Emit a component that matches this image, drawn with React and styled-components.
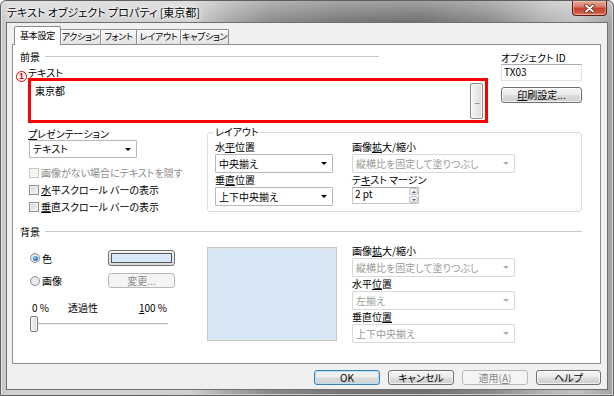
import React from "react";
import styled, { createGlobalStyle } from "styled-components";

const FONT = `"Noto Sans CJK JP", "Noto Sans", sans-serif`;

const GlobalStyle = createGlobalStyle`
  html, body { margin: 0; padding: 0; background: #fff; }
  body {
    font-family: ${FONT};
    font-size: 10px;
    color: #000;
    font-feature-settings: "palt" 1;
  }
  #root { width: 614px; height: 396px; overflow: hidden; }
  *, *::before, *::after { box-sizing: border-box; }
`;

const Window = styled.div`
  width: 614px;
  height: 396px;
  display: flex;
  flex-direction: column;
  border: 1px solid #5f5f5f;
  border-radius: 6px 6px 0 0;
  padding: 0 5px 5px;
  background-image: linear-gradient(180deg, rgba(255,255,255,0.35) 0px, rgba(255,255,255,0) 22px),
    linear-gradient(90deg, #c4c4c4 0px, #d2d2d2 8px, #cfcfcf 190px, #aaaaaa 225px, #8a8a8a 270px, #767676 340px,
      #6e6e6e 420px, #8a8a8a 490px, #b4b4b4 545px, #c2c2c2 575px, #a2a2a2 612px);
  box-shadow: inset 1px 0 0 #e6e6e6, inset -1px 0 0 #dcdcdc, inset 0 -1px 0 #d0d0d0;
`;

const TitleBar = styled.div`
  height: 21px;
  margin: 0 -5px;
  padding: 0 6px;
  display: flex;
  align-items: flex-start;
  justify-content: space-between;
`;

const TitleText = styled.div`
  font-size: 11px;
  line-height: 12px;
  margin-top: 5px;
  color: #000;
  text-shadow: 0 0 6px #fff, 0 0 3px #fff, 0 0 2px #fff;
`;

const CloseButton = styled.div`
  width: 35px;
  height: 15px;
  display: flex;
  align-items: center;
  justify-content: center;
  border: 1px solid #5b1d15;
  border-top: none;
  border-radius: 0 0 4px 4px;
  background: linear-gradient(180deg, #e9a99b 0%, #d77a66 42%, #c2402e 52%, #cf5a43 85%, #e08a70 100%);
  box-shadow: inset 0 0 0 1px rgba(255, 220, 210, 0.45);
`;

const Client = styled.div`
  flex: 1;
  display: flex;
  flex-direction: column;
  background: #f0f0f0;
  border: 1px solid #6f6f6f;
  padding: 3px 6px 0 5px;
`;

const TabRow = styled.div`
  display: flex;
  align-items: flex-end;
  height: 18px;
  padding-left: 2px;
`;

const Tab = styled.div`
  position: relative;
  z-index: ${(p) => (p.$active ? 2 : 1)};
  width: ${(p) => p.$w}px;
  height: ${(p) => (p.$active ? 19 : 15)}px;
  margin-left: ${(p) => (p.$first ? 0 : -1)}px;
  margin-bottom: ${(p) => (p.$active ? -1 : 0)}px;
  display: flex;
  align-items: center;
  justify-content: center;
  border: 1px solid #898c95;
  border-bottom: none;
  border-radius: 2px 2px 0 0;
  background: ${(p) => (p.$active ? "#fff" : "linear-gradient(180deg, #fbfbfb 0%, #eeeeee 50%, #e2e2e2 100%)")};
  box-shadow: ${(p) => (p.$active ? "none" : "inset 1px 1px 0 #fff")};
  font-size: 9px;
  letter-spacing: -0.3px;
  line-height: 12px;
  white-space: nowrap;
`;

const Panel = styled.div`
  position: relative;
  height: 320px;
  flex: none;
  background: #fff;
  border: 1px solid #898c95;
  padding: 5px 18px 0 7px;
  display: flex;
  flex-direction: column;
`;

const SectionHeader = styled.div`
  display: flex;
  align-items: center;
  height: 13px;
  line-height: 13px;
  margin-top: ${(p) => p.$mt || 0}px;
  white-space: nowrap;
`;

const Rule = styled.div`
  flex: 1;
  height: 1px;
  margin-left: 5px;
  margin-right: ${(p) => p.$end || 0}px;
  background: #c9c9c9;
`;

const TopArea = styled.div`
  display: flex;
  align-items: flex-start;
`;

const TopLeft = styled.div`
  flex: 1;
  display: flex;
  flex-direction: column;
`;

const TopRight = styled.div`
  width: 81px;
  margin-left: 13px;
  padding-top: 2px;
  display: flex;
  flex-direction: column;
`;

const Caption = styled.div`
  height: ${(p) => p.$lh || 12}px;
  line-height: ${(p) => p.$lh || 12}px;
  margin-left: ${(p) => p.$ml || 0}px;
  margin-top: ${(p) => p.$mt || 0}px;
  white-space: nowrap;
  color: ${(p) => (p.$disabled ? "#8d8d8d" : "#000")};
`;

const AnnotatedCaption = styled(Caption)`
  position: relative;
`;

const Badge = styled.span`
  position: absolute;
  left: -12px;
  top: 3px;
  width: 11px;
  height: 11px;
  border: 1px solid #e00000;
  border-radius: 50%;
  background: #fff;
  color: #e00000;
  font-family: "Liberation Sans", sans-serif;
  font-size: 9px;
  font-weight: bold;
  line-height: 9px;
  text-align: center;
`;

const RedFrame = styled.div`
  height: 45px;
  margin-left: 8px;
  border: 3px solid #ff0000;
  background: #fff;
  display: flex;
`;

const TextArea = styled.div`
  flex: 1;
  padding: 4px 4px 0;
  line-height: 12px;
`;

const EllipsisButton = styled.div`
  width: 13px;
  margin: 2px 2px 1px 0;
  display: flex;
  align-items: center;
  justify-content: center;
  border: 1px solid #8a8a8a;
  border-radius: 2px;
  background: linear-gradient(90deg, #f4f4f4 0%, #e9e9e9 50%, #dadada 100%);
  box-shadow: inset 0 0 0 1px #fbfbfb;
  color: #555;
  font-family: "Liberation Sans", sans-serif;
  font-size: 9px;
  letter-spacing: -1px;
  line-height: 9px;
  overflow: hidden;
`;

const TextInput = styled.div`
  height: 17px;
  padding: 0 2px;
  line-height: 14px;
  border: 1px solid #e2e3ea;
  border-top-color: #abadb3;
  background: #fff;
`;

const PushButton = styled.div`
  flex: none;
  width: ${(p) => p.$w}px;
  height: ${(p) => p.$h}px;
  margin-top: ${(p) => p.$mt || 0}px;
  display: flex;
  align-items: center;
  justify-content: center;
  border: 1px solid ${(p) => (p.$disabled ? "#b5b9bc" : p.$default ? "#3c7fb1" : "#707070")};
  border-radius: 3px;
  background: ${(p) =>
    p.$disabled
      ? "#f4f4f4"
      : "linear-gradient(180deg, #f4f4f4 0%, #ebebeb 48%, #dddddd 52%, #cfcfcf 100%)"};
  box-shadow: ${(p) =>
    p.$disabled ? "none" : p.$default ? "inset 0 0 0 1px #b4e2f8" : "inset 0 0 0 1px rgba(255,255,255,0.7)"};
  color: ${(p) => (p.$disabled ? "#8a8a8a" : "#000")};
  font-size: 10px;
  line-height: 12px;
  white-space: nowrap;
`;

const U = styled.span`
  text-decoration: underline;
  text-underline-offset: 1px;
`;

const Section2 = styled.div`
  display: flex;
  align-items: flex-start;
  margin-top: 4px;
`;

const PresCol = styled.div`
  width: 172px;
  margin-left: 8px;
  padding-top: 1px;
  display: flex;
  flex-direction: column;
`;

const SelectBox = styled.div`
  flex: none;
  width: ${(p) => p.$w}px;
  height: ${(p) => p.$h || 19}px;
  margin-left: ${(p) => p.$ml || 0}px;
  display: flex;
  align-items: center;
  justify-content: space-between;
  padding: 0 5px 0 3px;
  border: 1px solid ${(p) => (p.$disabled ? "#d9d9d9" : "#b9b9b9")};
  border-radius: 1px;
  background: #fff;
  color: ${(p) => (p.$disabled ? "#9a9a9a" : "#000")};
  line-height: 12px;
  white-space: nowrap;
  overflow: hidden;
`;

const Arrow = styled.span`
  flex: none;
  width: 0;
  height: 0;
  border-left: 3px solid transparent;
  border-right: 3px solid transparent;
  border-top: 3px solid ${(p) => (p.$disabled ? "#b0b0b0" : "#000")};
`;

const Select = ({ children, disabled, ...rest }) => (
  <SelectBox $disabled={disabled} {...rest}>
    <span>{children}</span>
    <Arrow $disabled={disabled} />
  </SelectBox>
);

const CheckList = styled.div`
  margin-top: 6px;
  display: flex;
  flex-direction: column;
`;

const CheckRow = styled.div`
  height: 17px;
  padding-left: 1px;
  display: flex;
  align-items: center;
  gap: 2px;
  white-space: nowrap;
  color: ${(p) => (p.$disabled ? "#8d8d8d" : "#000")};
`;

const CheckBox = styled.span`
  flex: none;
  width: 10px;
  height: 10px;
  border: 1px solid ${(p) => (p.$disabled ? "#c4c4c4" : "#8e8f8f")};
  background: ${(p) => (p.$disabled ? "#f4f4f4" : "linear-gradient(135deg, #cbcfd5 0%, #e8e9ea 60%, #f6f6f6 100%)")};
  box-shadow: inset 0 0 0 1px ${(p) => (p.$disabled ? "#fafafa" : "#f4f4f4")};
`;

const Group = styled.fieldset`
  flex: 1;
  min-width: 0;
  margin: 0 0 0 7px;
  padding: 3px 7px 5px 7px;
  border: 1px solid #d5dfe5;
  border-radius: 3px;
`;

const Legend = styled.legend`
  padding: 0 1px;
  margin-left: -1px;
  font-size: 10px;
  line-height: 10px;
`;

const GroupGrid = styled.div`
  display: grid;
  grid-template-columns: 118px 163px;
  column-gap: 19px;
`;

const Field = styled.div`
  display: flex;
  flex-direction: column;
`;

const Spin = styled.div`
  width: 67px;
  height: 17px;
  display: flex;
  border: 1px solid #c4c6cc;
  border-top-color: #abadb3;
  background: #fff;
`;

const SpinText = styled.div`
  flex: 1;
  padding: 0 2px;
  line-height: 12px;
`;

const SpinButtons = styled.div`
  width: 10px;
  display: flex;
  flex-direction: column;
  gap: 1px;
  padding: 0 0 0 1px;
`;

const SpinBtn = styled.div`
  flex: 1;
  display: flex;
  align-items: center;
  justify-content: center;
  border: 1px solid #c2c4c8;
  border-radius: 2px;
  background: linear-gradient(180deg, #f8f8f8, #e3e3e3);
`;

const SpinArrow = styled.span`
  width: 0;
  height: 0;
  border-left: 2px solid transparent;
  border-right: 2px solid transparent;
  ${(p) => (p.$up ? "border-bottom: 2px solid #4d6185;" : "border-top: 2px solid #4d6185;")}
`;

const BgBody = styled.div`
  display: flex;
  align-items: flex-start;
`;

const BgLeft = styled.div`
  width: 145px;
  margin-left: 10px;
  padding-top: 12px;
  display: flex;
  flex-direction: column;
`;

const RadioRow = styled.div`
  height: ${(p) => p.$h}px;
  margin-top: ${(p) => p.$mt || 0}px;
  display: flex;
  align-items: center;
`;

const RadioLabel = styled.div`
  width: 78px;
  display: flex;
  align-items: center;
  gap: 2px;
  white-space: nowrap;
`;

const Radio = styled.span`
  flex: none;
  width: 10px;
  height: 10px;
  border-radius: 50%;
  border: 1px solid #8e8f8f;
  background: radial-gradient(circle at 60% 65%, #f4f4f4 0%, #d8dbde 100%);
  display: flex;
  align-items: center;
  justify-content: center;
  &::after {
    content: "";
    display: ${(p) => (p.$checked ? "block" : "none")};
    width: 5px;
    height: 5px;
    border-radius: 50%;
    background: radial-gradient(circle at 40% 35%, #8cd0ff 0%, #2a7cc8 55%, #18497a 100%);
  }
`;

const ColorButton = styled.div`
  width: 67px;
  height: 16px;
  padding: 2px;
  display: flex;
  border: 1px solid #707070;
  border-radius: 3px;
  background: linear-gradient(180deg, #f2f2f2, #dcdcdc);
`;

const Swatch = styled.div`
  flex: 1;
  border: 1px solid #555;
  background: #d6e8f9;
`;

const SliderLabels = styled.div`
  width: 138px;
  height: 12px;
  margin-top: 14px;
  display: flex;
  line-height: 12px;
  white-space: nowrap;
`;

const SliderText = styled.span`
  margin-left: ${(p) => (p.$auto ? "auto" : `${p.$ml || 0}px`)};
  margin-right: ${(p) => p.$mr || 0}px;
`;

const SliderTrack = styled.div`
  width: 138px;
  height: 16px;
  margin-top: 2px;
  display: flex;
  background: linear-gradient(180deg, transparent 7px, #b6b6b6 7px, #b6b6b6 8px, #f4f4f4 8px, #f4f4f4 9px, transparent 9px);
`;

const SliderThumb = styled.div`
  width: 8px;
  height: 16px;
  border: 1px solid #7a7a7a;
  border-radius: 2px;
  background: linear-gradient(90deg, #f6f6f6 0%, #e4e4e4 60%, #d2d2d2 100%);
  box-shadow: inset 0 0 0 1px #fbfbfb;
`;

const Preview = styled.div`
  flex: none;
  width: 130px;
  height: 94px;
  margin-left: 32px;
  margin-top: 9px;
  border: 1px solid #c6c6c6;
  background: #d6e6f5;
  box-shadow: inset 0 0 0 1px #e6e6e6;
`;

const BgRight = styled.div`
  width: 163px;
  margin-left: 15px;
  margin-top: 6px;
  display: flex;
  flex-direction: column;
`;

const ButtonBar = styled.div`
  flex: 1;
  display: flex;
  justify-content: flex-end;
  align-items: flex-start;
  gap: 8px;
  padding-top: 6px;
`;

const CloseGlyph = () => (
  <svg width="11" height="9" viewBox="0 0 11 9">
    <path d="M2 1.5 L9 7.5 M9 1.5 L2 7.5" stroke="#5a1a10" strokeWidth="3.4" strokeLinecap="round" />
    <path d="M2 1.5 L9 7.5 M9 1.5 L2 7.5" stroke="#ffffff" strokeWidth="2" strokeLinecap="round" />
  </svg>
);

export default function App() {
  return (
    <>
      <GlobalStyle />
      <Window>
        <TitleBar>
          <TitleText>テキスト オブジェクト プロパティ [東京都]</TitleText>
          <CloseButton>
            <CloseGlyph />
          </CloseButton>
        </TitleBar>
        <Client>
          <TabRow>
            <Tab $first $active $w={47}>基本設定</Tab>
            <Tab $w={41}>アクション</Tab>
            <Tab $w={37}>フォント</Tab>
            <Tab $w={45}>レイアウト</Tab>
            <Tab $w={49}>キャプション</Tab>
          </TabRow>
          <Panel>
            <TopArea>
              <TopLeft>
                <SectionHeader>
                  <span>前景</span>
                  <Rule $end={109} />
                </SectionHeader>
                <AnnotatedCaption $lh={10} $ml={8} $mt={5}>
                  <Badge>1</Badge>
                  テキスト
                </AnnotatedCaption>
                <RedFrame>
                  <TextArea>東京都</TextArea>
                  <EllipsisButton>...</EllipsisButton>
                </RedFrame>
              </TopLeft>
              <TopRight>
                <Caption $lh={12}>オブジェクト ID</Caption>
                <TextInput>TX03</TextInput>
                <PushButton $w={81} $h={16} $mt={6}>
                  <U>印</U>刷設定...
                </PushButton>
              </TopRight>
            </TopArea>

            <Section2>
              <PresCol>
                <Caption $lh={12}>
                  <U>プ</U>レゼンテーション
                </Caption>
                <Select $w={108} $h={18} $ml={1}>テキスト</Select>
                <CheckList>
                  <CheckRow $disabled>
                    <CheckBox $disabled />
                    画像がない場合にテキストを隠す
                  </CheckRow>
                  <CheckRow>
                    <CheckBox />
                    <span><U>水</U>平スクロール バーの表示</span>
                  </CheckRow>
                  <CheckRow>
                    <CheckBox />
                    <span><U>垂</U>直スクロール バーの表示</span>
                  </CheckRow>
                </CheckList>
              </PresCol>
              <Group>
                <Legend>レイアウト</Legend>
                <GroupGrid>
                  <Field>
                    <Caption $lh={14}>水<U>平</U>位置</Caption>
                    <Select $w={118}>中央揃え</Select>
                  </Field>
                  <Field>
                    <Caption $lh={14}>画像<U>拡</U>大/縮小</Caption>
                    <Select $w={163} disabled>縦横比を固定して塗りつぶし</Select>
                  </Field>
                  <Field>
                    <Caption $lh={14}>垂<U>直</U>位置</Caption>
                    <Select $w={118}>上下中央揃え</Select>
                  </Field>
                  <Field>
                    <Caption $lh={14}>テ<U>キ</U>スト マージン</Caption>
                    <Spin>
                      <SpinText>2 pt</SpinText>
                      <SpinButtons>
                        <SpinBtn><SpinArrow $up /></SpinBtn>
                        <SpinBtn><SpinArrow /></SpinBtn>
                      </SpinButtons>
                    </Spin>
                  </Field>
                </GroupGrid>
              </Group>
            </Section2>

            <SectionHeader $mt={10}>
              <span>背景</span>
              <Rule />
            </SectionHeader>
            <BgBody>
              <BgLeft>
                <RadioRow $h={16}>
                  <RadioLabel>
                    <Radio $checked />
                    色
                  </RadioLabel>
                  <ColorButton>
                    <Swatch />
                  </ColorButton>
                </RadioRow>
                <RadioRow $h={15} $mt={7}>
                  <RadioLabel>
                    <Radio />
                    画像
                  </RadioLabel>
                  <PushButton $w={67} $h={15} $disabled>変更...</PushButton>
                </RadioRow>
                <SliderLabels>
                  <SliderText $ml={2}>0 %</SliderText>
                  <SliderText $ml={19}>透過性</SliderText>
                  <SliderText $auto $mr={1}><U>1</U>00 %</SliderText>
                </SliderLabels>
                <SliderTrack>
                  <SliderThumb />
                </SliderTrack>
              </BgLeft>
              <Preview />
              <BgRight>
                <Caption $lh={14}>画像<U>拡</U>大/縮小</Caption>
                <Select $w={163} disabled>縦横比を固定して塗りつぶし</Select>
                <Caption $lh={14}>水平<U>位</U>置</Caption>
                <Select $w={163} disabled>左揃え</Select>
                <Caption $lh={14}>垂直位<U>置</U></Caption>
                <Select $w={163} disabled>上下中央揃え</Select>
              </BgRight>
            </BgBody>
          </Panel>
          <ButtonBar>
            <PushButton $w={66} $h={15} $default>OK</PushButton>
            <PushButton $w={66} $h={15}>キャンセル</PushButton>
            <PushButton $w={66} $h={15} $disabled>
              適用(<U>A</U>)
            </PushButton>
            <PushButton $w={65} $h={15}>ヘルプ</PushButton>
          </ButtonBar>
        </Client>
      </Window>
    </>
  );
}
